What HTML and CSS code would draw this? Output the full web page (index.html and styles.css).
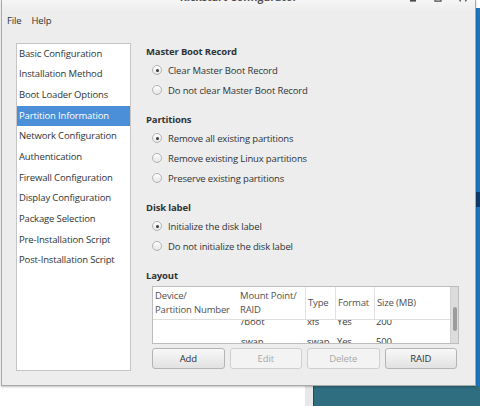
FILE: index.html
```html
<!DOCTYPE html>
<html>
<head>
<meta charset="utf-8">
<title>Kickstart Configurator</title>
<link rel="stylesheet" href="styles.css">
</head>
<body>
<div class="desktop">
  <div class="gap-strip"></div>
  <div class="other-window"></div>
  <div class="panel-strip"><div class="panel-mark"></div></div>
  <div class="window">
    <div class="titlebar">
      <span class="spacer"></span>
      <span class="title">Kickstart Configurator</span>
      <div class="controls">
        <span class="ctl"><svg width="10" height="3" viewBox="0 0 10 3"><rect x="2" y="0" width="6" height="1.6" fill="#4b4b4b"/></svg></span>
        <span class="ctl"><svg width="10" height="3" viewBox="0 0 10 3"><path d="M2 0 V1.2 H8 V0" fill="none" stroke="#4b4b4b" stroke-width="1.2"/></svg></span>
        <span class="ctl"><svg width="10" height="3" viewBox="0 0 10 3"><path d="M1.5 0 L2.8 1.4 M8.5 0 L7.2 1.4" stroke="#4b4b4b" stroke-width="1.2"/></svg></span>
      </div>
    </div>
    <div class="menubar">
      <span>File</span>
      <span>Help</span>
    </div>
    <div class="content">
      <ul class="sidebar">
        <li>Basic Configuration</li>
        <li>Installation Method</li>
        <li>Boot Loader Options</li>
        <li class="selected">Partition Information</li>
        <li>Network Configuration</li>
        <li>Authentication</li>
        <li>Firewall Configuration</li>
        <li>Display Configuration</li>
        <li>Package Selection</li>
        <li>Pre-Installation Script</li>
        <li>Post-Installation Script</li>
      </ul>
      <div class="pane">
        <div class="section">
          <div class="sec-title">Master Boot Record</div>
          <div class="opt"><span class="radio checked"></span>Clear Master Boot Record</div>
          <div class="opt"><span class="radio"></span>Do not clear Master Boot Record</div>
        </div>
        <div class="section">
          <div class="sec-title">Partitions</div>
          <div class="opt"><span class="radio checked"></span>Remove all existing partitions</div>
          <div class="opt"><span class="radio"></span>Remove existing Linux partitions</div>
          <div class="opt"><span class="radio"></span>Preserve existing partitions</div>
        </div>
        <div class="section">
          <div class="sec-title">Disk label</div>
          <div class="opt"><span class="radio checked"></span>Initialize the disk label</div>
          <div class="opt"><span class="radio"></span>Do not initialize the disk label</div>
        </div>
        <div class="sec-title">Layout</div>
        <div class="table">
          <div class="grid">
            <div class="thead">
              <div class="th">Device/<br>Partition Number</div>
              <div class="th">Mount Point/<br>RAID</div>
              <div class="th sep">Type</div>
              <div class="th sep">Format</div>
              <div class="th sep">Size (MB)</div>
            </div>
            <div class="tbody">
              <div class="rows">
                <div class="tr"><div class="td"></div><div class="td">/boot</div><div class="td">xfs</div><div class="td">Yes</div><div class="td">200</div></div>
                <div class="tr"><div class="td"></div><div class="td">swap</div><div class="td">swap</div><div class="td">Yes</div><div class="td">500</div></div>
              </div>
            </div>
          </div>
          <div class="scrollbar"><div class="thumb"></div></div>
        </div>
        <div class="buttons">
          <button class="btn">Add</button>
          <button class="btn" disabled>Edit</button>
          <button class="btn" disabled>Delete</button>
          <button class="btn">RAID</button>
        </div>
      </div>
    </div>
  </div>
</div>
</body>
</html>
```

FILE: styles.css
```css
* { box-sizing: border-box; margin: 0; padding: 0; }
html, body { width: 480px; height: 406px; overflow: hidden; }
body {
  background: #ffffff;
  font-family: "Open Sans", "DejaVu Sans", sans-serif;
  font-size: 9.5px;
  letter-spacing: -0.15px;
  color: #2e3436;
}
.desktop { position: relative; width: 480px; height: 406px; }
.gap-strip { position: absolute; left: 305px; top: 386px; width: 8px; bottom: 0; background: #e8e8e8; }
.other-window { position: absolute; left: 313px; top: 386px; right: 0; bottom: 0; background: #2f6d80; border-left: 1px solid #1d4c5a; }
.panel-strip { position: absolute; left: 476px; top: 8px; width: 4px; height: 378px; background: #1f74bf; }
.panel-mark { margin-top: 184px; height: 15px; background: #0e3c6c; }

.window {
  position: absolute; left: 1px; top: 0; width: 475px; height: 386px;
  background: #ededed;
  border: 1px solid #a8a8a8; border-top: none;
  box-shadow: 0 1px 2px rgba(0,0,0,0.25);
  display: flex; flex-direction: column;
}
.titlebar {
  height: 10px; overflow: hidden;
  background: linear-gradient(#f5f5f5, #eeeeee);
  display: grid; grid-template-columns: 1fr auto 1fr;
}
.title {
  font-weight: 700; font-size: 10.5px; line-height: 12px; color: #505050;
  margin-top: -9px; letter-spacing: 0;
}
.controls { display: flex; justify-content: flex-end; }
.ctl { width: 25px; display: flex; justify-content: center; align-items: flex-start; }
.ctl svg { display: block; }

.menubar {
  height: 21px; display: flex; align-items: center; gap: 10px; padding-left: 5px;
}

.content { flex: 1; display: flex; padding: 9px 0 0 14px; }
.sidebar {
  list-style: none; margin-top: 3px; width: 115px; height: 328px;
  background: #ffffff; border: 1px solid #c6c6c6;
}
.sidebar li { height: 20.7px; line-height: 20.7px; padding-left: 2px; white-space: nowrap; }
.sidebar li:first-child { margin-top: -0.5px; }
.sidebar li.selected { background: #4a8fd8; color: #ffffff; }

.pane { margin-left: 15px; width: 313px; display: flex; flex-direction: column; }
.section { margin-bottom: 8px; }
.sec-title { height: 20px; padding-top: 3px; line-height: 17px; font-weight: 700; }
.opt { height: 20px; display: flex; align-items: center; gap: 6px; padding-left: 6px; }
.radio {
  width: 10px; height: 10px; border-radius: 50%;
  border: 1px solid #b3b3b3;
  background: linear-gradient(#ffffff, #e6e6e6);
  display: flex; align-items: center; justify-content: center;
}
.radio.checked::after { content: ""; width: 3px; height: 3px; border-radius: 50%; background: #3a3a3a; }

.table {
  margin: 2px 0 0 6px; width: 307px; height: 58px;
  border: 1px solid #bdbdbd; background: #ffffff; display: flex;
}
.grid { flex: 1; display: flex; flex-direction: column; min-width: 0; }
.thead, .tr { display: grid; grid-template-columns: 85px 67px 30px 39px 1fr; }
.thead { height: 33px; border-bottom: 1px solid #dedede; color: #505050; }
.th { display: flex; align-items: center; padding-left: 2px; line-height: 14px; white-space: nowrap; }
.th.sep { border-left: 1px solid #e2e2e2; }
.tbody { height: 23px; overflow: hidden; }
.rows { margin-top: -8px; }
.tr { height: 20px; }
.td { line-height: 20px; padding-left: 2px; white-space: nowrap; color: #3a3a3a; }
.tr .td:nth-child(2) { padding-left: 3px; }
.scrollbar { width: 8px; background: #dcdcdc; border-left: 1px solid #d0d0d0; }
.thumb { margin: 20px 0 0 2px; width: 4px; height: 24px; border-radius: 2px; background: #9c9c9c; }

.buttons { margin: 4px 0 0 6px; width: 305px; height: 21px; display: flex; gap: 5px; }
.btn {
  flex: 1; font: inherit; letter-spacing: inherit; color: #2e3436;
  border: 1px solid #b4b4b0; border-radius: 3px;
  background: linear-gradient(#f8f8f8, #e2e2e2);
}
.btn:disabled { color: #a8a8a8; border-color: #cfcfcf; background: #f3f3f3; }
```
